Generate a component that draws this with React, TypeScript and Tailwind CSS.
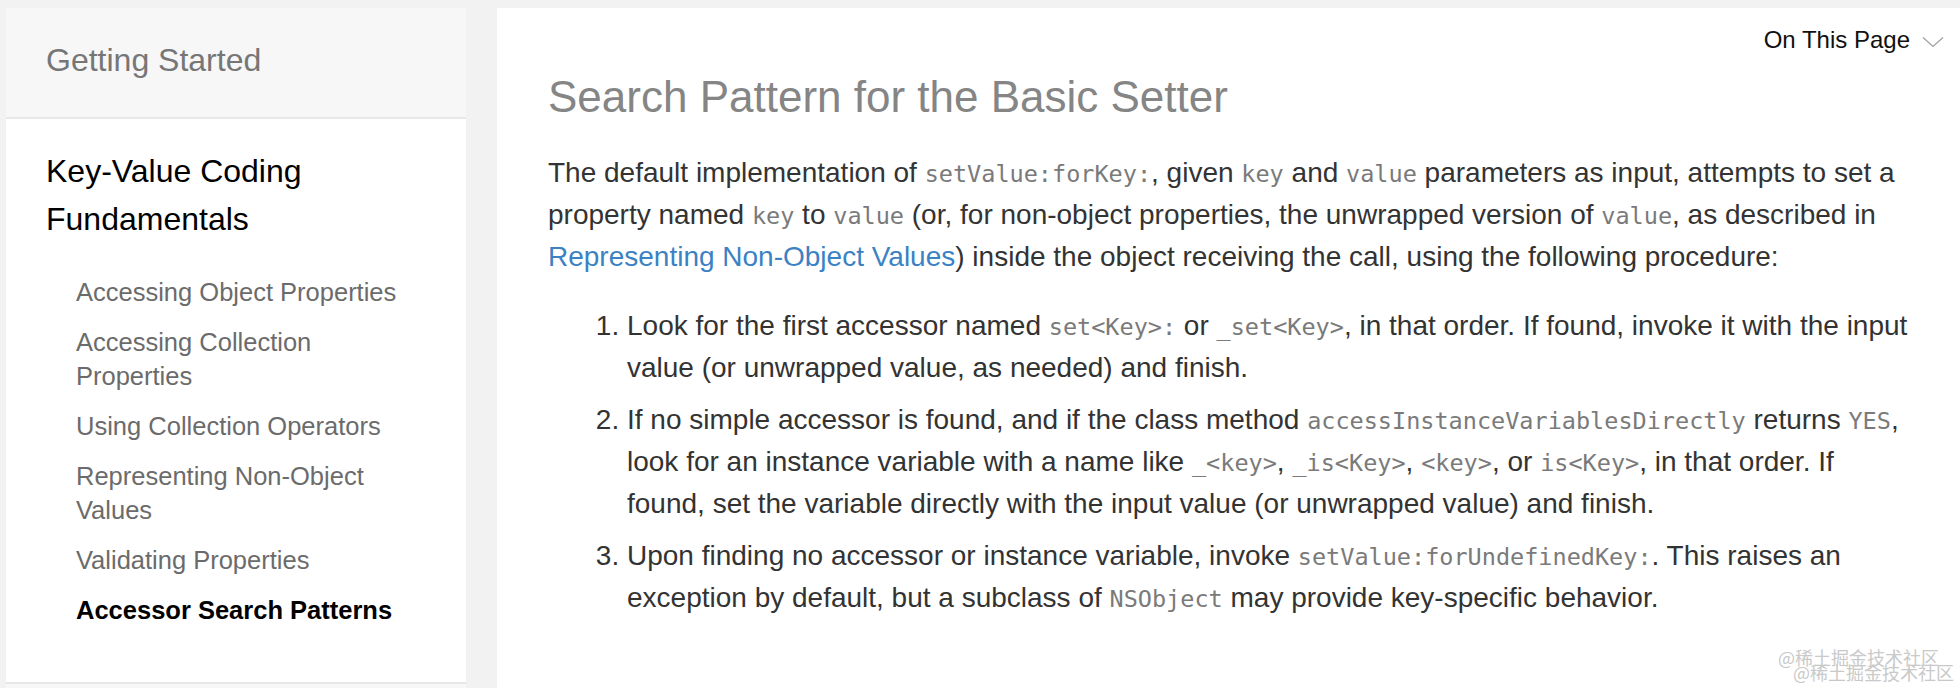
const sections = [
  'Accessing Object Properties',
  'Accessing Collection Properties',
  'Using Collection Operators',
  'Representing Non-Object Values',
  'Validating Properties',
];

function Code({ children }: { children: React.ReactNode }) {
  return (
    <code className="font-['DejaVu_Sans_Mono',monospace] text-[23.5px] leading-none text-[#7a7a7a]">{children}</code>
  );
}

export default function App() {
  return (
    <div className="relative flex h-[688px] gap-[31px] overflow-hidden bg-[#f2f2f2] pl-[6px] pt-[8px] font-['Liberation_Sans',Arial,sans-serif]">
      {/* sidebar */}
      <aside className="flex w-[460px] shrink-0 flex-col bg-white">
        <div className="flex h-[111px] shrink-0 items-center border-b-2 border-[#e8e8e8] bg-[#f7f7f7] px-[40px] pb-[5px] text-[32px] text-[#767676]">
          Getting Started
        </div>
        <div className="flex-1 px-[40px] pt-[28px]">
          <h2 className="text-[32px] leading-[48px] text-black">Key-Value Coding Fundamentals</h2>
          <ul className="mt-[32px] flex flex-col gap-[16px] pl-[30px] text-[25.5px] leading-[34px] text-[#6b6b6b]">
            {sections.map((s) => (
              <li key={s}>{s}</li>
            ))}
            <li className="font-bold text-black">Accessor Search Patterns</li>
          </ul>
        </div>
        <div className="h-[6px] shrink-0 border-t-2 border-[#e8e8e8] bg-[#f7f7f7]" />
      </aside>

      {/* main content */}
      <main className="flex-1 bg-white pl-[51px] pr-[16px] pt-[17px]">
        <div className="flex items-center justify-end gap-[12px] text-[24px] leading-[29px] text-[#111]">
          <span>On This Page</span>
          <svg width="22" height="12" viewBox="0 0 22 12" className="mt-[4px]">
            <polyline points="1,1.5 11,10.5 21,1.5" fill="none" stroke="#a0a0a0" strokeWidth="1.3" />
          </svg>
        </div>
        <div className="pr-[26px]">
          <h1 className="mt-[16px] text-[44px] font-light leading-[53px] text-[#858585]">
            Search Pattern for the Basic Setter
          </h1>
          <p className="mt-[29px] text-[28px] leading-[42px] text-[#333]">
            The default implementation of <Code>setValue:forKey:</Code>, given <Code>key</Code> and{' '}
            <Code>value</Code> parameters as input, attempts to set a property named <Code>key</Code> to{' '}
            <Code>value</Code> (or, for non-object properties, the unwrapped version of <Code>value</Code>, as
            described in <a className="text-[#3b82c4]">Representing Non-Object Values</a>) inside the object
            receiving the call, using the following procedure:
          </p>
          <ol className="mt-[27px] flex list-decimal flex-col gap-[10px] pl-[79px] text-[28px] leading-[42px] text-[#333]">
            <li>
              Look for the first accessor named <Code>set&lt;Key&gt;:</Code> or <Code>_set&lt;Key&gt;</Code>, in that
              order. If found, invoke it with the input value (or unwrapped value, as needed) and finish.
            </li>
            <li>
              If no simple accessor is found, and if the class method <Code>accessInstanceVariablesDirectly</Code>{' '}
              returns <Code>YES</Code>, look for an instance variable with a name like <Code>_&lt;key&gt;</Code>,{' '}
              <Code>_is&lt;Key&gt;</Code>, <Code>&lt;key&gt;</Code>, or <Code>is&lt;Key&gt;</Code>, in that order. If
              found, set the variable directly with the input value (or unwrapped value) and finish.
            </li>
            <li>
              Upon finding no accessor or instance variable, invoke <Code>setValue:forUndefinedKey:</Code>. This
              raises an exception by default, but a subclass of <Code>NSObject</Code> may provide key-specific
              behavior.
            </li>
          </ol>
        </div>
      </main>

      {/* watermark */}
      <div className="absolute bottom-[22px] right-[21px] font-['Noto_Sans_CJK_SC',sans-serif] text-[18px] leading-none text-[#c9c9c9]">
        @稀土掘金技术社区
      </div>
      <div className="absolute bottom-[7px] right-[6px] font-['Noto_Sans_CJK_SC',sans-serif] text-[18px] leading-none text-[#c9c9c9]">
        @稀土掘金技术社区
      </div>
    </div>
  );
}
